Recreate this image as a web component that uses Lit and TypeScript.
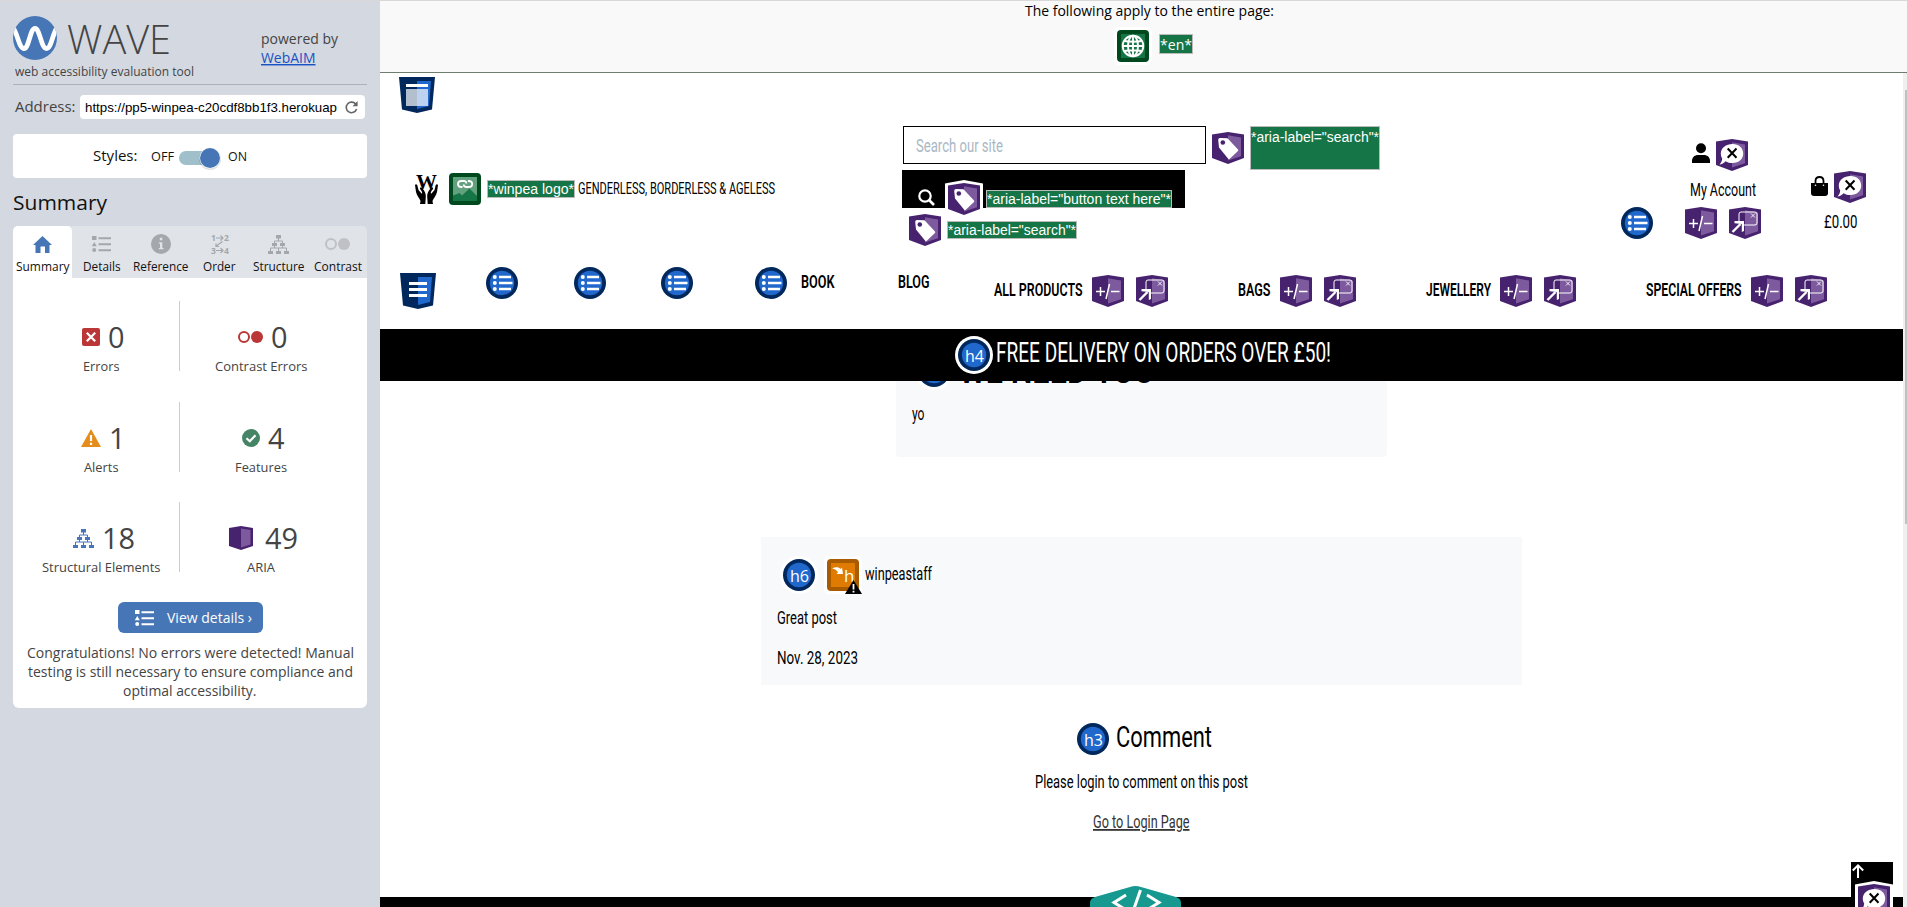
import { LitElement, html, svg, css, nothing } from "lit";
import { customElement } from "lit/decorators.js";

interface TextOptions {
  size: number;
  baseline: number;
  height: number;
  cls?: string;
}

const line = (text: string, width: number, o: TextOptions) => html`<svg
  class="line ${o.cls ?? ""}" width=${width} height=${o.height}><text
  x="0" y=${o.baseline} font-size=${o.size} textLength=${width} lengthAdjust="spacingAndGlyphs">${text}</text></svg>`;

const narrow = (text: string, width: number, cls = "") =>
  line(text, width, { size: 18, baseline: 18, height: 24, cls: "narrow " + cls });

const sans = (text: string, width: number, size: number, cls = "") =>
  line(text, width, { size, baseline: 15, height: 20, cls: "sans " + cls });

const cube = (inner: unknown, cls = "") => html`<svg class="badge ${cls}" width="32" height="32" viewBox="0 0 32 32">
  ${cls.includes("ringed") ? svg`<path class="ring" d="M0 3L16 0L32 3V26L16 32L0 26Z"/>` : nothing}
  <path fill="#47226e" d="M0 2.5L16 0L32 2.5V26L16 32L0 26Z"/>
  <path fill="#7d5a9d" d="M16 3.3L29 5.5V24.3L16 28.5Z"/>${inner}</svg>`;

const tag = (cls = "") => cube(svg`<path fill="#fff" d="M6.2 8Q6.2 6 8 6L15.500 6.300L26 17.600Q26.500 18.500 26 19L17.500 27Q16.600 27.400 16 26.600L7 15.500Z"/>
  <circle cx="10.800" cy="10.500" r="2.300" fill="#47226e"/>`, cls);

const unlabelled = (cls = "") => cube(svg`<path fill="#fff" d="M16.500 5C23 5 27.200 9 27.200 14.500S23 24 16.500 24C14 24 11.500 23.500 9.500 22.200C8 24 5.800 25.300 3.500 25.500C5.500 23.500 6 21.500 6.200 19.500C5.200 18 4.800 16.300 4.800 14.500C4.800 9 10 5 16.500 5Z"/>
  <path d="M11.700 9.500L20.500 18.800M20.500 9.500L11.700 18.800" stroke="#000" stroke-width="2"/>`, cls);

const expand = () => cube(svg`<path d="M4 16.500H13M8.500 12V21M19 16.500H27.500M17.500 9L14 24" stroke="#fff" stroke-width="1.500" fill="none"/>`);

const popup = () => cube(svg`<path d="M10 14V7Q10 5 12 5H26Q28 5 28 7V16Q28 18 26 18H15" stroke="#fff" stroke-width="1" fill="none"/>
  <path d="M22 6.500L26 10.500M26 6.500L22 10.500" stroke="#fff" stroke-width=".9"/>
  <path d="M3.500 25L11.500 17" stroke="#fff" stroke-width="2.400"/>
  <path fill="#fff" d="M5.500 14H15V24L12.800 25V17L5.500 16.300Z"/>`);

const disc = (inner: unknown, cls = "") => html`<svg class="badge ${cls}" width="32" height="32" viewBox="0 0 32 32">
  ${cls.includes("ringed") ? svg`<circle cx="16" cy="16" r="19" fill="#fff"/>` : nothing}
  <circle cx="16" cy="16" r="16" fill="#00285d"/><circle cx="16" cy="16" r="12.200" fill="#2068cc"/>${inner}</svg>`;

const list = (cls = "") => disc(svg`<g fill="#fff"><circle cx="8.800" cy="10" r="2"/><circle cx="8.800" cy="16" r="2"/><circle cx="8.800" cy="22" r="2"/></g>
  <path d="M13 10H25M13 16H26.500M13 22H25" stroke="#fff" stroke-width="2.400"/>`, cls);

const heading = (label: string, cls = "") =>
  disc(svg`<text x="7" y="22.800" textLength="19" lengthAdjust="spacingAndGlyphs" class="disc-text">${label}</text>`, cls);

const landmark = (inner: unknown, cls = "") => html`<svg class="badge ${cls}" width="36" height="36" viewBox="0 0 36 36">
  <path fill="#00285d" d="M0 0H36L33 32.500L18 36L3 32.500Z"/><path fill="#2068cc" d="M18 4H32L30 29L18 32Z"/>${inner}</svg>`;

const structure = () => svg`<path d="M10.500 3V6M6.500 9V6H14.500V9M2.500 16V13H18.500V16M6.500 9V13M14.500 9V13M10.500 16V13" fill="none" stroke="currentColor"/>
  <path fill="currentColor" d="M8 0H13V3.500H8ZM4 8H9V11H4ZM12 8H17V11H12ZM0 16H5V19H0ZM8 16H13V19H8ZM16 16H21V19H16Z"/>`;

const details = () => svg`<path fill="currentColor" d="M0 0H4.500V4H0ZM2.200 6L4.800 10.200H-.2ZM6.500 1.300H19V3.300H6.500ZM6.500 7.300H19V9.300H6.500ZM6.500 13.300H19V15.300H6.500Z"/><circle cx="2.200" cy="14" r="2" fill="currentColor"/>`;

@customElement("wave-sidebar")
class WaveSidebar extends LitElement {
  static styles = css`
    :host { display: block; width: 354px; padding: 0 13px; background: #d4d8e0; color: #444; height: 907px; box-shadow: inset 0 1px #d8d8d8; }
    svg { display: block; overflow: visible; flex: none; }
    .line { fill: currentColor; font-family: "Open Sans", sans-serif; }
    .black { color: #111; }
    .brand { display: flex; height: 84px; border-bottom: 1px solid #aeb2b8; }
    .logo { width: 248px; }
    .mark { display: flex; gap: 9.500px; padding-top: 16px; }
    .wave { font-weight: 300; margin-top: 0; }
    .tagline { margin: 1px 0 0 2px; }
    .powered { padding-top: 29px; }
    .link { color: #1a52c4; margin-top: -1px; border-bottom: 0; }
    .link text { text-decoration: underline; }
    .address { display: flex; align-items: center; padding: 10px 2px 0; gap: 4px; }
    .field { display: flex; align-items: center; box-sizing: border-box; width: 285px; height: 24px; padding: 0 7px 0 5px; justify-content: space-between; background: #fff; border-radius: 4px; }
    .arial { font-family: "Liberation Sans", Arial, sans-serif; color: #000; }
    .styles { display: flex; align-items: center; height: 44px; margin-top: 15px; padding-left: 80px; background: #fff; border-radius: 4px; box-sizing: border-box; }
    .off { margin-left: 13px; }
    .toggle { margin: 4px 8px 0 5px; width: 41px; height: 22px; }
    .title { margin: 17px 0 13px; }
    .tabs { display: grid; grid-template-columns: repeat(6, 59px); height: 52px; background: #e0e3e8; border-radius: 5px 5px 0 0; }
    .tab { display: grid; grid-template-rows: 36px 16px; justify-items: center; align-items: center; color: #a4a7ab; border-radius: 5px 5px 0 0; }
    .active { background: #fff; color: #4776b6; }
    .mini { font: 700 8.500px "Open Sans", sans-serif; }
    .panel { background: #fff; border-radius: 0 0 6px 6px; height: 407px; padding: 23px 9px 0; display: flex; flex-direction: column; align-items: center; }
    .stats { display: grid; grid-template-columns: 158px 162px; grid-auto-rows: 70px; row-gap: 30.500px; align-self: flex-start; }
    .stat { display: grid; grid-template-rows: 56px 14px; justify-items: center; }
    .stat:nth-child(odd) { border-right: 1px solid #ccc; padding-left: 2px; }
    .value { display: flex; align-items: center; gap: 8px; padding: 16px 0 0 4px; height: 40px; }
    .label { align-self: start; margin-top: 0; }
    .button { display: flex; align-items: center; gap: 13px; width: 128px; height: 31px; padding-left: 17px; margin-top: 30px; border-radius: 6px; background: #4776b6; color: #fff; }
    .message { display: grid; justify-items: center; padding-top: 10px; }
    .message .line { height: 19px; }
  `;

  private tabs = [
    ["Summary", 53.5, 19, 17, svg`<path fill="currentColor" d="M9.500 0L19 9H16.500V17H12V10.500H7.500V17H2.500V9H0Z"/>`],
    ["Details", 37.5, 19, 16, details()],
    ["Reference", 55.5, 20, 20, svg`<circle cx="10" cy="10" r="10" fill="currentColor"/><path fill="#e0e3e8" d="M8.800 3.800H11.300V6.200H8.800ZM7.800 8.300H11.300V14H12.500V15.300H7.800V14H9V9.500H7.800Z"/>`],
    ["Order", 32.5, 20, 20, svg`<g fill="currentColor" class="mini"><text x="1" y="7">1</text><text x="14" y="7">2</text><text x="1" y="19.500">3</text><text x="14" y="19.500">4</text></g><path d="M6 4H13M10.500 1.500L13 4L10.500 6.500M6 16.500H13M10.500 14L13 16.500L10.500 19M12.500 7.500L5.500 12.500M6 9.500V12.500H9" fill="none" stroke="currentColor" stroke-width="1.200"/>`],
    ["Structure", 51.5, 21, 19, structure()],
    ["Contrast", 48, 25, 12, svg`<circle cx="6" cy="6" r="5" fill="none" stroke="#bfc1c4" stroke-width="2"/><circle cx="19" cy="6" r="6" fill="#bfc1c4"/>`],
  ] as const;

  private stats = [
    ["Errors", 36.5, "0", 16.5, 18, 18, svg`<rect width="18" height="18" rx="2" fill="#bb3637"/><path d="M4.800 4.800L13.200 13.200M13.200 4.800L4.800 13.200" stroke="#fff" stroke-width="2.200"/>`],
    ["Contrast Errors", 92.5, "0", 16.5, 25, 12, svg`<circle cx="6" cy="6" r="5" fill="none" stroke="#bb3637" stroke-width="2"/><circle cx="19" cy="6" r="6" fill="#bb3637"/>`],
    ["Alerts", 34.5, "1", 16.5, 20, 18, svg`<path fill="#e48d1a" d="M10 0L20 18H0Z"/><path stroke="#fff" stroke-width="2.200" d="M10 6V12M10 13.800V16"/>`],
    ["Features", 52, "4", 16.5, 18, 18, svg`<circle cx="9" cy="9" r="9" fill="#458566"/><path d="M4.500 9.200L7.800 12.300L13.500 6.300" fill="none" stroke="#fff" stroke-width="2.200"/>`],
    ["Structural Elements", 118.5, "18", 33, 21, 19, svg`<g color="#4776b6">${structure()}</g>`],
    ["ARIA", 28, "49", 33, 28, 24, svg`<path fill="#47226e" d="M0 2L12 0L24 2V20L12 24L0 20Z"/><path fill="#7d5a9d" d="M12 2.500L21.500 4V18.500L12 21.500Z"/>`],
  ] as const;

  render() {
    return html`
      <div class="brand">
        <div class="logo">
          <div class="mark">
            <svg width="44" height="44" viewBox="0 0 44 44"><clipPath id="c"><circle cx="22" cy="22" r="22"/></clipPath>
              <g clip-path="url(#c)"><rect width="44" height="44" fill="#4776b6"/>
              <path d="M-1 10C5 18 6 32.500 11 32.500C16 32.500 17 12.500 22 12.500S28 32.500 33.500 32.500C38.500 32.500 39 18 45 10" fill="none" stroke="#fff" stroke-width="4.800"/></g></svg>
            ${line("WAVE", 104, { size: 40.5, baseline: 38, height: 44, cls: "wave" })}
          </div>
          <div class="tagline">${sans("web accessibility evaluation tool", 179, 12.3)}</div>
        </div>
        <div class="powered">${sans("powered by", 77, 14.4)}<div class="link">${sans("WebAIM", 54.5, 14.4)}</div></div>
      </div>
      <div class="address">
        ${sans("Address:", 60.5, 14.6)}
        <div class="field">${line("https://pp5-winpea-c20cdf8bb1f3.herokuap", 252, { size: 13.33, baseline: 14.5, height: 20, cls: "arial" })}
          <svg width="13" height="13" viewBox="0 0 13 13"><path d="M11 3.500A5.300 5.300 0 1 0 11.600 8" fill="none" stroke="#666" stroke-width="1.600"/><path fill="#666" d="M12.600 0V5.200H7.500Z"/></svg></div>
      </div>
      <div class="styles black">
        ${sans("Styles:", 44.5, 14.4)}
        <div class="off">${sans("OFF", 23, 12.6)}</div>
        <svg class="toggle"><rect x="0" y="4" width="38" height="14" rx="7" fill="#9fbfca"/><circle cx="31" cy="12" r="11" fill="#000" opacity=".12"/><circle cx="31" cy="11" r="10.500" fill="#fff"/><circle cx="31" cy="11" r="10" fill="#4776b6"/></svg>
        ${sans("ON", 19, 12.6)}
      </div>
      <div class="title black">${line("Summary", 94, { size: 20.8, baseline: 15, height: 18 })}</div>
      <div class="tabs">${this.tabs.map(([name, w, iw, ih, icon], i) => html`<div class="tab ${i === 0 ? "active" : ""}">
        <svg width=${iw} height=${ih} viewBox="0 0 ${iw} ${ih}">${icon}</svg>
        ${line(name, w, { size: 12, baseline: 9, height: 16, cls: "black" })}</div>`)}</div>
      <div class="panel">
        <div class="stats">${this.stats.map(([name, w, n, nw, iw, ih, icon]) => html`<div class="stat">
          <div class="value"><svg width=${iw} height=${ih} viewBox="0 0 ${iw} ${ih}">${icon}</svg>
          ${line(n, nw, { size: 28.8, baseline: 21, height: 20 })}</div>
          ${line(name, w, { size: 12.8, baseline: 14, height: 14, cls: "label" })}</div>`)}</div>
        <div class="button"><svg width="19" height="16" viewBox="0 0 19 16">${details()}</svg>${sans("View details ›", 85, 14.2)}</div>
        <div class="message">${sans("Congratulations! No errors were detected! Manual", 327, 14.2)}${sans("testing is still necessary to ensure compliance and", 325, 14.2)}${sans("optimal accessibility.", 133.5, 14.2)}</div>
      </div>`;
  }
}

@customElement("app-root")
class AppRoot extends LitElement {
  static styles = css`
    :host { display: flex; width: 1907px; height: 907px; overflow: hidden; background: #fff; box-shadow: inset 0 1px #d8d8d8; color: #000; }
    wave-sidebar { flex: none; }
    svg { display: block; overflow: visible; flex: none; }
    .line { fill: currentColor; font-family: "Open Sans", sans-serif; }
    .narrow { font-family: Roboto, "Open Sans", sans-serif; font-weight: 400; }
    .bold { font-weight: 600; }
    .ring { fill: #fff; stroke: #fff; stroke-width: 6px; }
    .disc-text { fill: #fff; font: 17px "Open Sans", sans-serif; }
    .main { flex: 1; min-width: 0; display: flex; flex-direction: column; }
    .pagewide { flex: none; display: flex; flex-direction: column; align-items: center; height: 71px; margin-top: 1px; background: #f9f9f9; border-bottom: 1px solid #6f7d6f; }
    .globals { display: flex; gap: 10px; padding: 9px 0 0 22px; }
    .intro { margin-left: 12px; }
    .flag { box-sizing: border-box; flex: none; background: #167546; border: 1px solid #bbb; color: #fff; height: 18px; white-space: nowrap; }
    .flag .line { font-family: "Liberation Sans", Arial, sans-serif; }
    .lang { height: 20px; margin-top: 4px; width: 34px; }
    .lang .line { font-family: "Open Sans", sans-serif; }
    .viewport { display: flex; height: 834px; flex: none; }
    .page { width: 1523px; flex: none; display: flex; flex-direction: column; height: 834px; overflow: hidden; }
    .track { flex: 1; background: #f0f0f0; padding-left: 2px; }
    .thumb { height: 434px; margin-top: 17px; background: #c1c1c1; }
    .head { height: 252px; padding-top: 4px; flex: none; }
    .first { margin-left: 19px; }
    .mid { display: flex; height: 120px; margin-top: 13px; }
    .brand { display: flex; align-items: center; height: 32px; margin: 47px 127px 0 35px; }
    .brand .badge { margin: 0 6px 0 11px; }
    .brand .flag { margin-right: 3px; }
    .search { width: 719px; }
    .query { display: flex; height: 44px; }
    .input { box-sizing: border-box; width: 303px; height: 38px; border: 1px solid #000; margin: 0 6px 0 1px; padding: 7px 12px; color: #a9b8c4; }
    .query .badge { margin: 6px 6px 0 0; }
    .tall { height: 44px; padding-top: 2px; }
    .submit { display: flex; box-sizing: border-box; width: 283px; height: 38px; padding-left: 16px; background: #000; }
    .glass { margin: 19px 13px 0 0; }
    .submit .badge { margin: 13px 6px 0 0; }
    .submit .flag { margin-top: 20px; z-index: 1; }
    .again { display: flex; gap: 6px; padding: 6px 0 0 7px; }
    .again .flag { margin-top: 7px; }
    .tools { display: flex; }
    .menu { margin-top: 81px; }
    .account { margin: 13px 0 0 32px; width: 76px; display: flex; flex-direction: column; }
    .pair { display: flex; gap: 6px; padding-left: 7px; }
    .person { margin-top: 4px; }
    .account .narrow { margin: 7px 0 0 5px; }
    .controls { display: flex; gap: 12px; margin-top: 5px; }
    .bag { margin: 45px 0 0 50px; }
    .bag .pair { padding: 0; }
    .bag .narrow { margin: 7px 0 0 13px; }
    .purse { margin-top: 5px; }
    .nav { display: flex; height: 42px; margin-top: 21px; }
    .landmark { margin: 6px 50px 0 20px; }
    .dots { display: grid; grid-template-columns: 88px 87px 94px 46px; width: 315px; }
    .book { margin: 3px 63.500px 0 0; }
    .blog { margin: 3px 64px 0 0; }
    .entry { display: flex; }
    .entry .narrow { margin: 11px 9.500px 0 0; }
    .entry .controls { margin-top: 8px; }
    .menus { display: flex; gap: 70px; }
    .banner { display: flex; height: 52px; background: #000; color: #fff; flex: none; padding-left: 578px; gap: 6px; position: relative; z-index: 1; }
    .banner .badge { margin-top: 10px; }
    .banner .line { margin-top: 8px; }
    .post { width: 476px; height: 102px; margin: -26px 0 0 516px; padding-left: 15px; background: #f8f9fb; border-radius: 0 0 4px 4px; flex: none; }
    .post-title { display: flex; gap: 9px; padding-left: 7px; }
    .need { font-weight: 600; }
    .yo { margin: 15px 0 0 1px; }
    .comment { box-sizing: border-box; width: 761px; height: 148px; margin: 80px 0 0 381px; padding: 22px 16px; background: #f8f9fb; flex: none; }
    .author { display: flex; padding-left: 6px; gap: 12px; }
    .author .narrow { margin: 3px 0 0 -6px; }
    .great { margin: 15px 0 16px; }
    .join { display: flex; flex-direction: column; align-items: center; width: 1523px; height: 212px; flex: none; }
    .join-title { display: flex; gap: 7px; padding: 38px 0 0 6px; }
    .please { margin: 15px 0 16px; }
    .go { color: #333; }
    .go text { text-decoration: underline; }
    .foot { height: 10px; flex: none; background: #000; display: flex; position: relative; }
    .hex { margin: -11px 0 0 710px; }
    .top { position: absolute; right: 10px; top: -35px; width: 42px; height: 46px; background: #000; }
    .up { margin: 2px 0 0 1px; padding-top: 0; }
    .top .badge { margin: 6px 0 0 7px; }
  `;

  private menus = [
    ["ALL PRODUCTS", 88.5],
    ["BAGS", 32.5],
    ["JEWELLERY", 65],
    ["SPECIAL OFFERS", 95.5],
  ] as const;

  private flag(text: string, width: number, cls = "") {
    return html`<div class="flag ${cls}">${line(text, width, { size: cls === "lang" ? 14.4 : 14, baseline: cls === "lang" ? 15 : 13, height: 16 })}</div>`;
  }

  render() {
    return html`
      <wave-sidebar></wave-sidebar>
      <div class="main">
        <div class="pagewide">
          <div class="intro">${sans("The following apply to the entire page:", 249, 14.4)}</div>
          <div class="globals">
            <svg class="badge" width="32" height="32" viewBox="0 0 32 32"><rect x="-3" y="-3" width="38" height="38" rx="5" fill="#fff"/><rect width="32" height="32" rx="4" fill="#00491f"/><rect x="4" y="4" width="24" height="24" fill="#167546"/>
              <g fill="none" stroke="#fff" stroke-width="1.900"><circle cx="16" cy="16" r="10.300"/><ellipse cx="16" cy="16" rx="5" ry="10.300"/><path d="M16 5.500V26.500M6 16H26M7.500 11Q16 12.500 24.500 11M7.500 21Q16 19.500 24.500 21"/></g></svg>
            ${this.flag("*en*", 32, "lang")}
          </div>
        </div>
        <div class="viewport">
          <div class="page">
            <div class="head">
              ${landmark(svg`<path fill="#fff" d="M7 7H29V10H7Z"/><path fill="#fff" opacity=".7" d="M7 12H29V29H7Z"/>`, "first")}
              <div class="mid">
                <div class="brand">
                  <svg width="23" height="30" viewBox="0 0 23 30"><text x="1" y="14.500" font-family="Liberation Serif" font-weight="700" font-size="20" textLength="21" lengthAdjust="spacingAndGlyphs">W</text>
                    <path d="M0 11C1 9.500 2.300 10.500 2.500 12L3.500 16L6.500 19.500C8 20 7 17 5 15C4.500 13.500 6 13 7.500 14.500C9.500 17 11 19 10.800 22.500L10.300 30H5L5.500 27C4.500 24 2 22 1 18Z"/>
                    <path d="M23 11C22 9.500 20.700 10.500 20.500 12L19.500 16L16.500 19.500C15 20 16 17 18 15C18.500 13.500 17 13 15.500 14.500C13.500 17 12 19 12.200 22.500L12.700 30H18L17.500 27C18.500 24 21 22 22 18Z"/></svg>
                  <svg class="badge" width="32" height="32" viewBox="0 0 32 32"><rect width="32" height="32" rx="4" fill="#00491f"/><rect x="4" y="4" width="24" height="24" fill="#62a17e"/><path fill="#167546" d="M4 22.500L10.500 20L13 22.500L20.500 15.500L28 23V28H4Z"/>
                    <path d="M13.500 14H12.300Q9 14 9 11Q9 8 12.500 8H14.800Q17.500 8 17.300 10.500M14.700 11.500Q14.700 14 17.500 14H19.500Q23.200 14 23.200 11Q23.200 8 19.500 8H18.800" fill="none" stroke="#fff" stroke-width="1.800"/></svg>
                  ${this.flag("*winpea logo*", 86)}
                  ${line("GENDERLESS, BORDERLESS & AGELESS", 197, { size: 16, baseline: 16, height: 22, cls: "narrow" })}
                </div>
                <div class="search">
                  <div class="query"><div class="input">${narrow("Search our site", 87)}</div>${tag()}${this.flag('*aria-label="search"*', 128, "tall")}</div>
                  <div class="submit">
                    <svg class="glass" width="17" height="17" viewBox="0 0 17 17"><circle cx="7" cy="7" r="5.700" fill="none" stroke="#fff" stroke-width="2.200"/><path d="M11 11L16 16" stroke="#fff" stroke-width="2.600"/></svg>
                    ${tag("ringed")}${this.flag('*aria-label="button text here"*', 184)}
                  </div>
                  <div class="again">${tag()}${this.flag('*aria-label="search"*', 128)}</div>
                </div>
                <div class="tools">
                  ${list("menu")}
                  <div class="account">
                    <div class="pair"><svg class="person" width="18" height="20" viewBox="0 0 18 20"><circle cx="9" cy="5.200" r="5"/><path d="M0 20V18C0 14 3 12 6 12H12C15 12 18 14 18 18V20Z"/></svg>${unlabelled()}</div>
                    ${narrow("My Account", 66)}
                    <div class="controls">${expand()}${popup()}</div>
                  </div>
                  <div class="bag">
                    <div class="pair"><svg class="purse" width="17" height="20" viewBox="0 0 17 20"><path d="M4.500 10V5Q4.500 1 8.500 1T12.500 5V10" fill="none" stroke="#000" stroke-width="1.800"/><path d="M0 7H17V17Q17 20 14 20H3Q0 20 0 17Z"/><circle cx="4.500" cy="9.200" r=".8" fill="#fff"/><circle cx="12.500" cy="9.200" r=".8" fill="#fff"/></svg>${unlabelled()}</div>
                    ${narrow("£0.00", 33.5)}
                  </div>
                </div>
              </div>
              <div class="nav">
                ${landmark(svg`<path fill="#fff" d="M9 9H27V12H9ZM9 15H27V18H9ZM9 21H27V24H9Z"/>`, "landmark")}
                <div class="dots">${list()}${list()}${list()}${list()}</div>
                <div class="book">${narrow("BOOK", 33.5, "bold")}</div>
                <div class="blog">${narrow("BLOG", 31.5, "bold")}</div>
                <div class="menus">${this.menus.map(([name, w]) => html`<div class="entry">${narrow(name, w, "bold")}<div class="controls">${expand()}${popup()}</div></div>`)}</div>
              </div>
            </div>
            <div class="banner">${heading("h4", "ringed")}${line("FREE DELIVERY ON ORDERS OVER £50!", 335, { size: 27, baseline: 25, height: 34, cls: "narrow" })}</div>
            <div class="post">
              <div class="post-title">${heading("h2", "ringed")}${line("WE NEED YOU", 195, { size: 36, baseline: 27.5, height: 32, cls: "narrow need" })}</div>
              <div class="yo">${narrow("yo", 12.5)}</div>
            </div>
            <div class="comment">
              <div class="author">${heading("h6", "ringed")}
                <svg class="badge" width="32" height="32" viewBox="0 0 32 32"><rect x="-3" y="-3" width="38" height="38" rx="5" fill="#fff"/><rect width="32" height="32" rx="4" fill="#a85b00"/><rect x="4" y="4" width="24" height="24" fill="#de7b00"/>
                  <path fill="#fff" d="M5 9.500C9 7.500 12 8 13.500 10L15 8.500L16 15H9.500L11 13.300C9.500 11 8 9.800 5 9.500Z"/><text x="17" y="22.800" class="disc-text">h</text><path d="M26.500 21L35 35H18Z"/><path stroke="#fff" stroke-width="1.800" d="M26.500 25V30.500M26.500 31.800V33.500"/></svg>
                ${narrow("winpeastaff", 67)}</div>
              <div class="great">${narrow("Great post", 60)}</div>
              ${narrow("Nov. 28, 2023", 81)}
            </div>
            <div class="join">
              <div class="join-title">${heading("h3")}${line("Comment", 96, { size: 30, baseline: 24, height: 32, cls: "narrow" })}</div>
              <div class="please">${narrow("Please login to comment on this post", 213)}</div>
              <div class="go">${narrow("Go to Login Page", 96.5)}</div>
            </div>
            <div class="foot">
              <svg class="hex" width="91" height="22" viewBox="0 0 91 22"><path fill="#17998f" d="M0 22V17Q0 12.500 5 11L40 1Q45.500 -1 51 1L86 11Q91 12.500 91 17V22Z"/><path d="M36 9L24 16.500L36 24M57 9L69 16.500L57 24M50.500 4L43.500 24" fill="none" stroke="#fff" stroke-width="3"/></svg>
              <div class="top"><svg class="up" width="12" height="14" viewBox="0 0 12 14"><path d="M6 14V1.500M.800 6.500L6 1.300L11.200 6.500" fill="none" stroke="#fff" stroke-width="2"/></svg>${unlabelled("ringed")}</div>
            </div>
          </div>
          <div class="track"><div class="thumb"></div></div>
        </div>
      </div>`;
  }
}
